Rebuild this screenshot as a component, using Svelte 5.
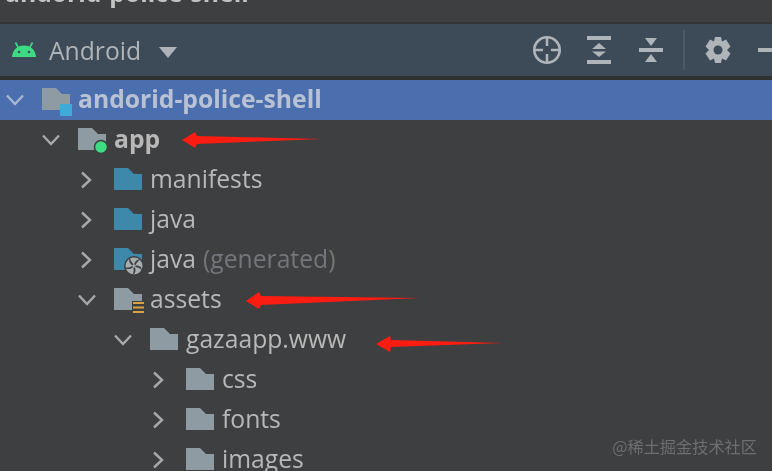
<script lang="ts">
  type Row = { name: string; depth: number; open: boolean; icon: string; bold?: boolean; hint?: string; selected?: boolean };

  const rows: Row[] = [
    { name: 'andorid-police-shell', depth: 0, open: true, icon: 'root', bold: true, selected: true },
    { name: 'app', depth: 1, open: true, icon: 'module', bold: true },
    { name: 'manifests', depth: 2, open: false, icon: 'blue' },
    { name: 'java', depth: 2, open: false, icon: 'blue' },
    { name: 'java', depth: 2, open: false, icon: 'generated', hint: '(generated)' },
    { name: 'assets', depth: 2, open: true, icon: 'assets' },
    { name: 'gazaapp.www', depth: 3, open: true, icon: 'plain' },
    { name: 'css', depth: 4, open: false, icon: 'plain' },
    { name: 'fonts', depth: 4, open: false, icon: 'plain' },
    { name: 'images', depth: 4, open: false, icon: 'plain' }
  ];

  const folder = 'M0 0H14L20 6H28V22H0Z';
  const blades = [0, 72, 144, 216, 288];
</script>

<div class="window">
  <div class="titlebar"><span class="title">andorid-police-shell</span></div>

  <div class="toolbar">
    <svg class="android" width="24" height="18" viewBox="0 0 24 18">
      <path d="M0 17C0.5 10 5 5.5 12 5.5S23.5 10 24 17Z" fill="#3ddc84" />
      <path d="M6 7L3.5 2.5M18 7L20.500 2.500" stroke="#3ddc84" stroke-width="1.600" />
      <circle cx="7" cy="12" r="1.300" fill="#3d4a58" />
      <circle cx="17" cy="12" r="1.300" fill="#3d4a58" />
    </svg>
    <span class="view">Android</span>
    <svg class="caret" width="18" height="11" viewBox="0 0 18 11"><path d="M0 0H18L9 11Z" fill="#aeb4b9" /></svg>

    <div class="tools">
      <svg width="30" height="30" viewBox="0 0 30 30" fill="none" stroke="#afb4b8" stroke-width="2.600">
        <circle cx="15" cy="15" r="12.700" />
        <path d="M15 2V11M15 19V28M2 15H11M19 15H28" />
      </svg>
      <svg width="24" height="28" viewBox="0 0 24 28" fill="#afb4b8">
        <rect width="24" height="4" />
        <rect y="24" width="24" height="4" />
        <path d="M12 7L19 13H5ZM12 21L5 15.500H19Z" />
      </svg>
      <svg width="24" height="26" viewBox="0 0 24 26" fill="#afb4b8">
        <rect y="11" width="24" height="4" />
        <path d="M12 9L6 1H18ZM12 17L18 25H6Z" />
      </svg>
      <span class="sep"></span>
      <svg class="gear" width="26" height="28" viewBox="0 0 26 28">
        <path d="M10 1H16L17 5.500L21 3.500L25.500 10.500L22 14L25.500 17.500L21 24.500L17 22.500L16 27H10L9 22.500L5 24.500L0.500 17.500L4 14L0.500 10.500L5 3.500L9 5.500Z" fill="#afb4b8" />
        <circle cx="13" cy="14" r="4.500" fill="#3d4a58" />
      </svg>
      <span class="minus"></span>
    </div>
  </div>

  <div class="tree">
    {#each rows as r}
      <div class="row" class:selected={r.selected} style={`padding-left:${r.depth * 36 + 6}px`}>
        <svg class="chev" width="18" height="18" viewBox="0 0 18 18" fill="none" stroke={r.selected ? '#a9b7d2' : '#a7a9ab'} stroke-width="2.400">
          {#if r.open}
            <path d="M1 4.500L9 13L17 4.500" />
          {:else}
            <path d="M4 1.500L12 9L4 16.500" />
          {/if}
        </svg>
        <svg class="icon" width="30" height="28" viewBox="0 0 30 28">
          <path d={folder} fill={r.icon === 'blue' || r.icon === 'generated' ? '#3d88ab' : '#8f9ba3'} />
          {#if r.icon === 'root'}
            <rect x="18" y="16" width="12" height="12" fill="#3fa9d8" />
          {:else if r.icon === 'module'}
            <circle cx="23" cy="19" r="6.500" fill="#3ddc84" stroke="#3e3f40" stroke-width="1.500" />
          {:else if r.icon === 'assets'}
            <rect x="18" y="13" width="13" height="15" fill="#3e3f40" />
            <path d="M19 15H30M19 19.500H30M19 24H30" stroke="#d9a343" stroke-width="2.200" />
          {:else if r.icon === 'generated'}
            <circle cx="20" cy="18" r="10" fill="#3e3f40" />
            <circle cx="20" cy="18" r="8.500" fill="#a8adb0" />
            <g transform="translate(20 18)">
              {#each blades as a}
                <path d="M0 -1.500C1 -5 3 -7 7 -6.500C4.500 -5.500 3 -4 1.500 -1Z" fill="#3e3f40" transform={`rotate(${a})`} />
              {/each}
            </g>
          {/if}
        </svg>
        <span class="label" class:bold={r.bold}>{r.name}</span>
        {#if r.hint}<span class="hint">{r.hint}</span>{/if}
      </div>
    {/each}
  </div>

  <!-- hand drawn annotations on top of the screenshot -->
  <svg class="marks" width="772" height="471" viewBox="0 0 772 471">
    <path d="M182 140L195 132L197 136L322 139L197 144L195 148Z" fill="#fb1c12" />
    <path d="M246 301L259 292L261 296L420 298L261 305L259 309Z" fill="#fb1c12" />
    <path d="M376 344L390 336L391 340L503 343L391 347L390 352Z" fill="#fb1c12" />
  </svg>

  <div class="watermark">@稀土掘金技术社区</div>
</div>

<style>
  :global(body) { margin: 0; background: #3e3f40; }
  .window {
    position: relative;
    width: 772px;
    height: 471px;
    overflow: hidden;
    background: #3e3f40;
    color: #b8b8b8;
    font-family: "Open Sans", "Noto Sans", sans-serif;
    filter: blur(0.4px);
  }
  .titlebar { height: 22px; border-bottom: 2px solid #333537; padding-left: 5px; overflow: hidden; }
  .title { display: block; margin-top: -24px; font-size: 24.7px; line-height: 34px; font-weight: 700; color: #c4c4c4; white-space: nowrap; }

  .toolbar {
    height: 52px;
    display: flex;
    align-items: center;
    padding-left: 12px;
    background: #3d4a58;
    border-bottom: 4px solid #2f3133;
  }
  .android { margin-bottom: 2px; }
  .view { margin-left: 13px; margin-top: 2px; font-size: 24.7px; color: #afb4b9; line-height: 34px; }
  .caret { margin-left: 18px; margin-top: 4px; }
  .tools { display: flex; align-items: center; margin-left: auto; }
  .tools svg:nth-child(1) { margin-right: 25px; }
  .tools svg:nth-child(2) { margin-right: 28px; }
  .sep { width: 2px; height: 40px; margin: 0 20px; background: #4c5864; }
  .gear { margin-right: 27px; }
  .minus { width: 14px; height: 4px; background: #afb4b8; }

  .tree { display: flex; flex-direction: column; }
  .row { height: 40px; flex: none; display: flex; align-items: center; box-sizing: border-box; }
  .row.selected { background: #4b6eaf; }
  .row.selected .label { color: #b9c2d4; }
  .chev { flex: none; }
  .icon { flex: none; margin-left: 18px; margin-top: 4px; }
  .label { margin-left: 6px; margin-bottom: 2px; font-size: 24.7px; line-height: 34px; white-space: nowrap; }
  .label.bold { font-weight: 700; }
  .hint { margin-left: 7px; margin-bottom: 2px; font-size: 24.7px; line-height: 34px; color: #73767a; white-space: nowrap; }

  .marks { position: absolute; left: 0; top: 0; pointer-events: none; }
  .watermark {
    position: absolute;
    right: 15px;
    bottom: 15px;
    font-family: "Noto Sans CJK SC", sans-serif;
    font-size: 16.2px;
    line-height: 20px;
    color: #6d6e70;
  }
</style>
